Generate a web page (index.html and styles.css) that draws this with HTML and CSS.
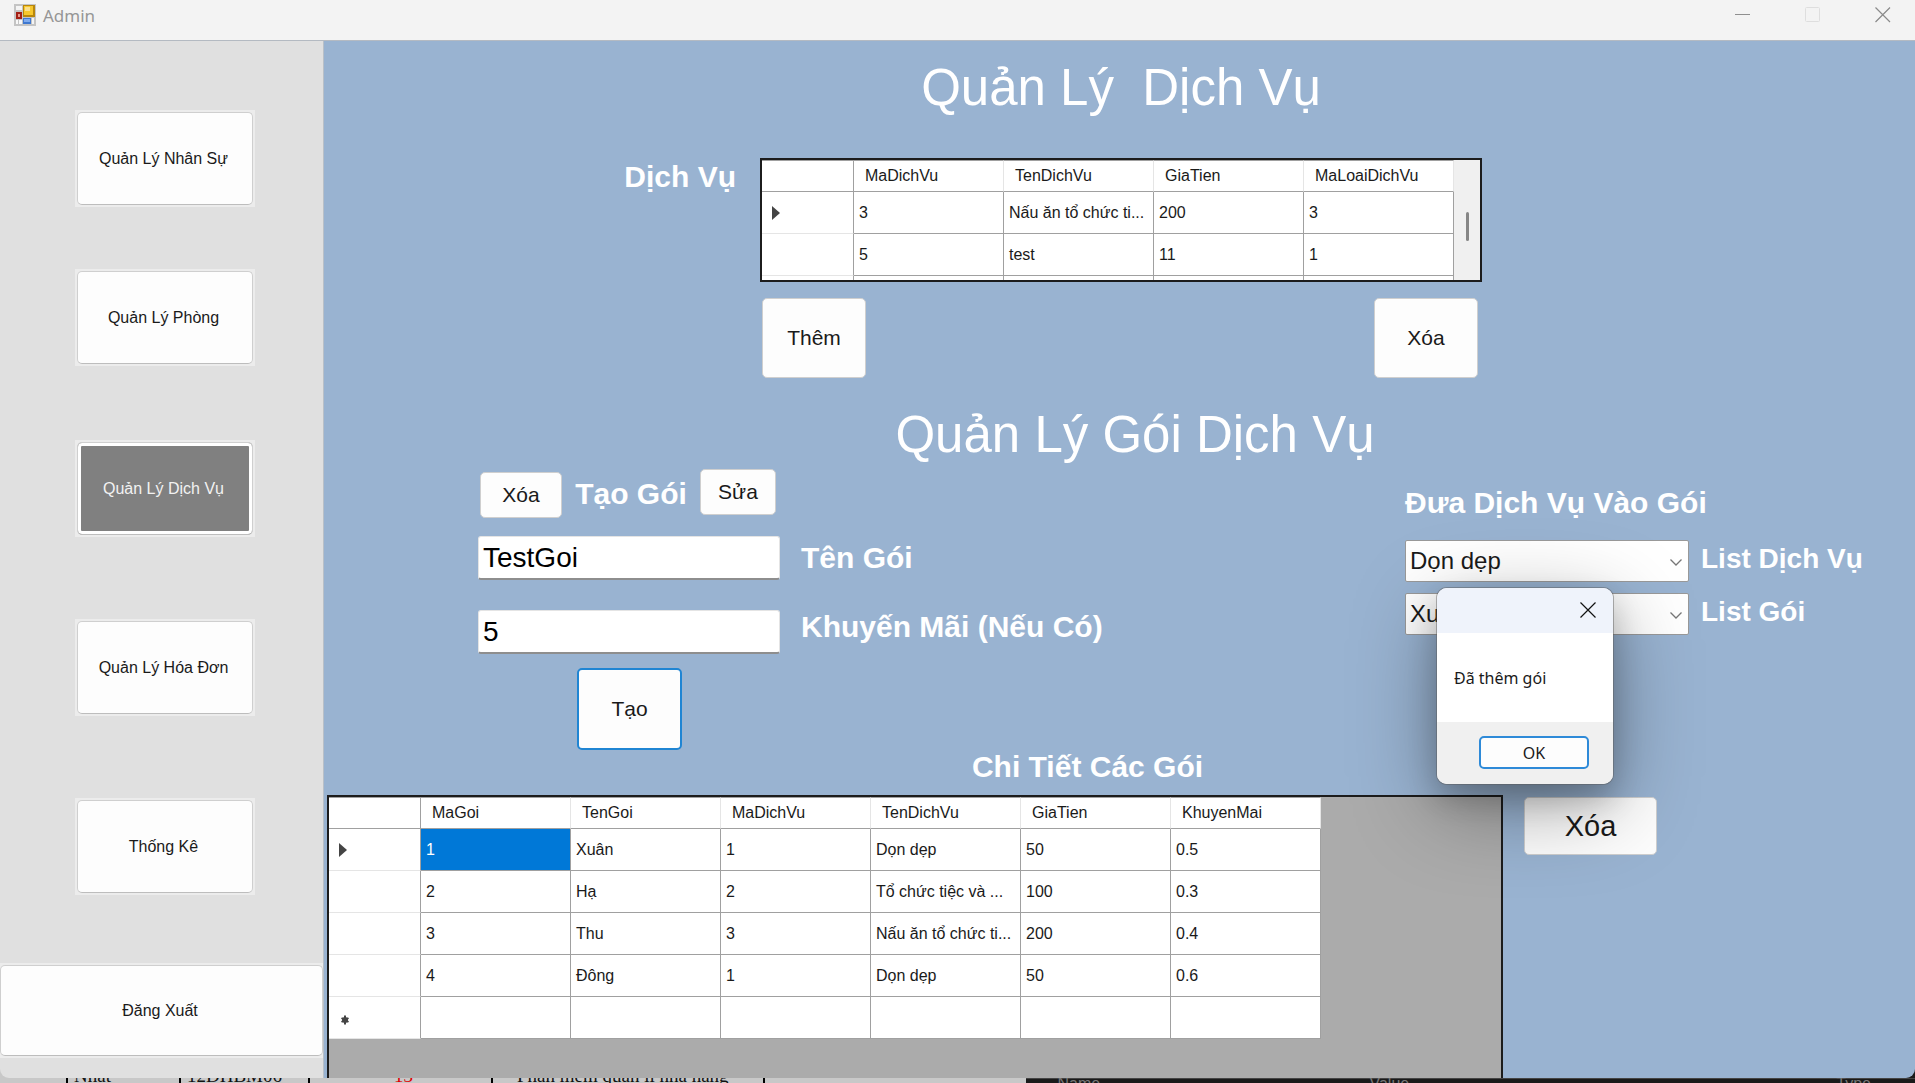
FILE: index.html
```html
<!DOCTYPE html>
<html lang="vi">
<head>
<meta charset="utf-8">
<title>Admin</title>
<link rel="stylesheet" href="styles.css">
</head>
<body>
<div class="window">
  <header class="titlebar">
    <svg class="app-icon" viewBox="0 0 22 22" aria-hidden="true">
      <rect width="22" height="22" fill="#c4c4c4"/>
      <rect x="2" y="2" width="6" height="4" fill="#f4f4f4"/>
      <rect x="2" y="16" width="2" height="4" fill="#f8f8f8"/>
      <rect x="5" y="16" width="3" height="4" fill="#f8f8f8"/>
      <rect x="18" y="14" width="2" height="6" fill="#f4f4f4"/>
      <rect x="9" y="1" width="12" height="12" fill="#b8860b"/>
      <rect x="10" y="2" width="9" height="9" fill="#f7c72c"/>
      <rect x="11" y="3" width="5" height="4" fill="#fbe08a"/>
      <rect x="2" y="8" width="6" height="7" fill="#a31f14"/>
      <rect x="4" y="10" width="2" height="3" fill="#e8978c"/>
      <rect x="9" y="14" width="8" height="6" fill="#3f78d0"/>
      <rect x="10" y="15" width="6" height="3" fill="#7fabee"/>
    </svg>
    <span class="app-title">Admin</span>
    <div class="window-controls">
      <button type="button" aria-label="Thu nhỏ"><svg viewBox="0 0 16 16"><path d="M0 7.5h15" stroke="#8f8f8f"/></svg></button>
      <button type="button" aria-label="Phóng to" disabled><svg viewBox="0 0 16 16"><rect x=".5" y=".5" width="14" height="14" rx="1" fill="none" stroke="#dedede"/></svg></button>
      <button type="button" aria-label="Đóng"><svg viewBox="0 0 16 16"><path d="M.5.5l14.500 14.500M15 .5l-14.500 14.500" stroke="#8a8a8a" stroke-width="1.2"/></svg></button>
    </div>
  </header>

  <div class="body">
    <nav class="sidebar">
      <div class="menu">
        <button type="button" class="nav-btn">Quản Lý Nhân Sự</button>
        <button type="button" class="nav-btn">Quản Lý Phòng</button>
        <button type="button" class="nav-btn active">Quản Lý Dịch Vụ</button>
        <button type="button" class="nav-btn">Quản Lý Hóa Đơn</button>
        <button type="button" class="nav-btn">Thống Kê</button>
      </div>
      <button type="button" class="nav-btn logout">Đăng Xuất</button>
    </nav>

    <main class="pane">
      <h1 class="title">Quản Lý&nbsp; Dịch Vụ</h1>

      <section class="services">
        <h2 class="label services-label">Dịch Vụ</h2>
        <div class="services-box">
          <div class="grid-frame services-grid">
            <table class="data">
              <thead>
                <tr><th class="row-head"></th><th>MaDichVu</th><th>TenDichVu</th><th>GiaTien</th><th>MaLoaiDichVu</th></tr>
              </thead>
              <tbody>
                <tr><th class="row-head"><svg class="mark" viewBox="0 0 10 14"><path d="M1 0l8 7-8 7z" fill="#444"/></svg></th><td>3</td><td>Nấu ăn tổ chức ti...</td><td>200</td><td>3</td></tr>
                <tr><th class="row-head"></th><td>5</td><td>test</td><td>11</td><td>1</td></tr>
                <tr><th class="row-head"></th><td></td><td></td><td></td><td></td></tr>
              </tbody>
            </table>
            <div class="scrollbar"><span class="thumb"></span></div>
          </div>
          <div class="services-actions">
            <button type="button" class="btn btn-square">Thêm</button>
            <button type="button" class="btn btn-square">Xóa</button>
          </div>
        </div>
      </section>

      <h1 class="title title-packages">Quản Lý Gói Dịch Vụ</h1>

      <section class="forms">
        <form class="create">
          <div class="create-head">
            <button type="button" class="btn btn-delete">Xóa</button>
            <h2 class="label">Tạo Gói</h2>
            <button type="button" class="btn btn-edit">Sửa</button>
          </div>
          <div class="field">
            <input id="package-name" class="text-input" type="text" value="TestGoi">
            <label class="label" for="package-name">Tên Gói</label>
          </div>
          <div class="field field-discount">
            <input id="package-discount" class="text-input" type="text" value="5">
            <label class="label" for="package-discount">Khuyến Mãi (Nếu Có)</label>
          </div>
          <button type="button" class="btn btn-square btn-create">Tạo</button>
        </form>

        <form class="assign">
          <h2 class="label assign-label">Đưa Dịch Vụ Vào Gói</h2>
          <div class="assign-row">
            <span class="combo">
              <select id="service-list"><option>Dọn dẹp</option></select>
              <svg viewBox="0 0 12 7"><path d="M.5.5L6 6 11.500.5" fill="none" stroke="#777" stroke-width="1.3"/></svg>
            </span>
            <label class="label list-label" for="service-list">List Dịch Vụ</label>
          </div>
          <div class="assign-row">
            <span class="combo">
              <select id="package-list"><option>Xuân</option></select>
              <svg viewBox="0 0 12 7"><path d="M.5.5L6 6 11.500.5" fill="none" stroke="#777" stroke-width="1.3"/></svg>
            </span>
            <label class="label list-label" for="package-list">List Gói</label>
          </div>

          <div class="dialog" role="dialog" aria-labelledby="dialog-text">
            <div class="dialog-head">
              <button type="button" class="dialog-close" aria-label="Đóng"><svg viewBox="0 0 16 16"><path d="M.5.5l15 15M15.5.5l-15 15" stroke="#111" stroke-width="1.2"/></svg></button>
            </div>
            <p class="dialog-text" id="dialog-text">Đã thêm gói</p>
            <div class="dialog-foot"><button type="button" class="dialog-ok">OK</button></div>
          </div>
        </form>
      </section>

      <h2 class="label details-label">Chi Tiết Các Gói</h2>

      <section class="details">
        <div class="grid-frame details-grid">
          <table class="data">
            <thead>
              <tr><th class="row-head"></th><th>MaGoi</th><th>TenGoi</th><th>MaDichVu</th><th>TenDichVu</th><th>GiaTien</th><th>KhuyenMai</th></tr>
            </thead>
            <tbody>
              <tr><th class="row-head"><svg class="mark" viewBox="0 0 10 14"><path d="M1 0l8 7-8 7z" fill="#444"/></svg></th><td class="selected">1</td><td>Xuân</td><td>1</td><td>Dọn dẹp</td><td>50</td><td>0.5</td></tr>
              <tr><th class="row-head"></th><td>2</td><td>Hạ</td><td>2</td><td>Tổ chức tiệc và ...</td><td>100</td><td>0.3</td></tr>
              <tr><th class="row-head"></th><td>3</td><td>Thu</td><td>3</td><td>Nấu ăn tổ chức ti...</td><td>200</td><td>0.4</td></tr>
              <tr><th class="row-head"></th><td>4</td><td>Đông</td><td>1</td><td>Dọn dẹp</td><td>50</td><td>0.6</td></tr>
              <tr><th class="row-head"><svg class="mark mark-new" viewBox="0 0 10 10"><path d="M5 .5v9M1.500 3l7 4M8.500 3l-7 4" stroke="#444" stroke-width="2"/><circle cx="5" cy="5" r="3" fill="#444"/></svg></th><td></td><td></td><td></td><td></td><td></td><td></td></tr>
            </tbody>
          </table>
        </div>
        <div class="details-actions"><button type="button" class="btn btn-large">Xóa</button></div>
      </section>
    </main>
  </div>
</div>

<div class="backdrop">
  <div class="doc">
    <span class="doc-cell doc-gap"></span>
    <span class="doc-cell doc-name">Nhật</span>
    <span class="doc-cell doc-class">12DHBM06</span>
    <span class="doc-cell doc-number">13</span>
    <span class="doc-cell doc-topic">Phần mềm quản lí nhà hàng</span>
  </div>
  <div class="watch"><span>Name</span><span>Value</span><span>Type</span></div>
</div>
</body>
</html>
```
FILE: styles.css
```css
* {
  box-sizing: border-box;
}

body {
  margin: 0;
  height: 100vh;
  display: flex;
  flex-direction: column;
  overflow: hidden;
  background: linear-gradient(90deg, #c8c8c8 53.6%, #1a1a1a 53.6%);
  font-family: "Liberation Sans", Arial, sans-serif;
  font-size: 16px;
  color: #1a1a1a;
}

button,
input,
select {
  font-family: inherit;
  color: inherit;
  margin: 0;
  padding: 0;
}

h1,
h2,
p {
  margin: 0;
}

.window {
  flex: 1;
  min-height: 0;
  display: flex;
  flex-direction: column;
  border-radius: 0 0 9px 9px;
  overflow: hidden;
}

/* title bar */
.titlebar {
  flex: none;
  height: 41px;
  display: flex;
  align-items: flex-start;
  padding: 4px 24px 0 14px;
  background: #f3f3f3;
  border-bottom: 1px solid #b4bac2;
}

.app-icon {
  width: 22px;
  height: 22px;
}

.app-title {
  margin-left: 7px;
  font: 17px/24px "Noto Sans", sans-serif;
  color: #969696;
}

.window-controls {
  margin-left: auto;
  display: flex;
  gap: 54px;
  padding-top: 3px;
}

.window-controls button,
.dialog-close {
  width: 16px;
  height: 16px;
  border: 0;
  background: none;
}

.window-controls svg,
.dialog-close svg {
  display: block;
  width: 16px;
  height: 16px;
}

.body {
  flex: 1;
  min-height: 0;
  display: flex;
}

/* side menu */
.sidebar {
  flex: none;
  width: 324px;
  display: flex;
  flex-direction: column;
  background: #e0e0e0;
  border-right: 1px solid #b9c0c8;
}

.menu {
  display: flex;
  flex-direction: column;
  align-items: center;
  padding: 69px 0 0 6px;
}

.nav-btn {
  width: 180px;
  height: 97px;
  border: 2px solid #ececec;
  border-radius: 0;
  background: #ececec;
  padding-right: 2px;
  font-size: 16px;
  position: relative;
  z-index: 0;
}

.nav-btn::before {
  content: "";
  position: absolute;
  inset: 0;
  z-index: -1;
  border: 1px solid #cfcfcf;
  border-bottom-color: #bdbdbd;
  border-radius: 5px;
  background: #fdfdfd;
}

.nav-btn.active {
  color: #f2f2f2;
}

.nav-btn.active::before {
  box-shadow: inset 0 0 0 3px #fff;
  background: #808080;
}

.nav-btn:nth-child(2) {
  margin-top: 62px;
}

.nav-btn:nth-child(3) {
  margin-top: 74px;
}

.nav-btn:nth-child(n + 4) {
  margin-top: 82px;
}

.nav-btn.logout {
  width: 100%;
  height: 95px;
  margin: auto 0 20px;
  border-width: 2px 0;
  padding-right: 3px;
}

/* main pane */
.pane {
  flex: 1;
  min-width: 0;
  display: flex;
  flex-direction: column;
  padding: 17px 0 0 3px;
  background: #99b3d1;
}

.title {
  font-size: 51px;
  line-height: 60px;
  font-weight: 400;
  text-align: center;
  color: #fff;
}

.title-packages {
  margin-top: 27px;
  padding-left: 28px;
}

.label {
  font-size: 30px;
  line-height: 34px;
  font-weight: 700;
  white-space: nowrap;
  color: #fff;
}

.btn {
  flex: none;
  border: 1px solid #cfcfcf;
  border-radius: 5px;
  background: #fdfdfd;
  font-size: 21px;
}

.btn-square {
  width: 104px;
  height: 80px;
}

.services {
  display: grid;
  grid-template-columns: 1fr 722px 1fr;
  margin-top: 40px;
}

.services-label {
  padding: 2px 24px 0 0;
  text-align: right;
}

.services-actions {
  display: flex;
  justify-content: space-between;
  padding: 16px 4px 0 2px;
}

/* data grids */
.grid-frame {
  display: flex;
  align-items: flex-start;
  overflow: hidden;
  border: 2px solid #1c1c1c;
  background: #ababab;
}

.services-grid {
  height: 124px;
  background: #fff;
}

.data {
  table-layout: fixed;
  width: min-content;
  border-collapse: separate;
  border-spacing: 0;
  background: #fff;
  text-align: left;
}

.data th,
.data td {
  width: 150px;
  min-width: 150px;
  max-width: 150px;
  height: 42px;
  padding: 0 3px 0 5px;
  border-right: 1px solid #a0a0a0;
  border-bottom: 1px solid #a0a0a0;
  font-weight: 400;
  white-space: nowrap;
}

.data thead th {
  height: 32px;
  padding-left: 11px;
  border-top: 1px solid #a0a0a0;
  border-right-color: #e5e5e5;
}

.data .row-head {
  width: 92px;
  min-width: 92px;
  max-width: 92px;
  padding-left: 9px;
  border-right-color: #a0a0a0;
}

.data tbody .row-head {
  border-bottom-color: #e5e5e5;
}

.data .selected {
  background: #0078d7;
  color: #fff;
}

.mark {
  display: block;
  width: 10px;
  height: 14px;
}

.mark-new {
  height: 10px;
  margin: 4px 0 0 2px;
}

.scrollbar {
  flex: 1;
  align-self: stretch;
  display: flex;
  justify-content: center;
  padding-top: 52px;
  background: #f0f0f0;
}

.thumb {
  width: 3px;
  height: 29px;
  border-radius: 2px;
  background: #868686;
}

/* package forms */
.forms {
  display: flex;
  justify-content: space-between;
  padding: 4px 48px 0 151px;
}

.create-head {
  display: flex;
  align-items: center;
  justify-content: space-between;
  width: 302px;
  height: 49px;
  padding: 0 4px 0 2px;
}

.btn-delete {
  align-self: flex-end;
  width: 82px;
  height: 46px;
}

.btn-edit {
  align-self: flex-start;
  width: 76px;
  height: 46px;
}

.field {
  display: flex;
  align-items: center;
  gap: 21px;
  margin-top: 18px;
}

.field-discount {
  align-items: flex-start;
  margin-top: 30px;
}

.text-input {
  width: 302px;
  height: 44px;
  padding: 0 4px;
  border: 1px solid #e4e4e4;
  border-bottom: 2px solid #8e8e8e;
  border-radius: 3px;
  background: #fff;
  font-size: 28px;
  color: #000;
}

.btn-create {
  display: block;
  width: 105px;
  height: 82px;
  margin: 14px 0 0 99px;
  border: 2px solid #1f85d3;
}

.assign {
  position: relative;
  width: 462px;
  padding-top: 17px;
}

.assign-label {
  margin-bottom: 20px;
}

.assign-row {
  display: flex;
  gap: 12px;
  margin-bottom: 11px;
}

.list-label {
  padding-top: 2px;
  font-size: 28px;
}

.combo {
  flex: none;
  display: grid;
  width: 284px;
  height: 42px;
}

.combo select {
  grid-area: 1 / 1;
  appearance: none;
  padding: 0 30px 2px 4px;
  border: 1px solid #999;
  border-radius: 2px;
  background: #fff;
  font-size: 24px;
}

.combo svg {
  grid-area: 1 / 1;
  place-self: center end;
  width: 12px;
  height: 7px;
  margin: 3px 7px 0 0;
  pointer-events: none;
}

/* message box floating above the form */
.dialog {
  position: absolute;
  left: 32px;
  top: 119px;
  width: 176px;
  height: 196px;
  display: flex;
  flex-direction: column;
  border-radius: 10px;
  overflow: hidden;
  background: #fff;
  box-shadow: 0 0 0 1px rgba(90, 90, 90, .45), 0 22px 84px rgba(0, 0, 0, .36), 0 14px 30px rgba(0, 0, 0, .2);
  font-family: "Noto Sans", sans-serif;
}

.dialog-head {
  height: 45px;
  padding: 13px 17px 0;
  text-align: right;
  background: #eff3fb;
}

.dialog-close {
  display: inline-block;
}

.dialog-text {
  flex: 1;
  padding: 34px 0 0 17px;
  font-size: 16px;
  line-height: 22px;
}

.dialog-foot {
  height: 62px;
  padding: 14px 24px 0;
  text-align: right;
  background: #f0f0f0;
}

.dialog-ok {
  width: 110px;
  height: 33px;
  border: 2px solid #2e8ad8;
  border-radius: 5px;
  background: #fdfdfd;
  font-size: 16px;
}

/* package details */
.details-label {
  padding-right: 67px;
  text-align: center;
}

.details {
  flex: 1;
  min-height: 0;
  display: flex;
  margin-top: 11px;
}

.details-grid {
  flex: 1;
  border-bottom: 0;
}

.details-actions {
  flex: none;
  width: 412px;
  padding: 2px 0 0 21px;
}

.btn-large {
  width: 133px;
  height: 58px;
  font-size: 29px;
}

/* windows lying behind, seen along the bottom edge */
.backdrop {
  flex: none;
  height: 5px;
  display: flex;
  overflow: hidden;
}

.doc {
  flex: none;
  width: 53.6%;
  display: flex;
  align-items: flex-end;
  font: 19px/15px "Liberation Serif", serif;
  color: #111;
}

.doc-cell {
  flex: none;
  height: 15px;
  padding-left: 6px;
  border-right: 2px solid #000;
  white-space: nowrap;
}

.doc-gap {
  width: 68px;
}

.doc-name {
  width: 113px;
}

.doc-class {
  width: 129px;
}

.doc-number {
  width: 183px;
  text-align: center;
  color: #e00000;
}

.doc-topic {
  width: 272px;
  padding-left: 24px;
}

.watch {
  flex: 1;
  display: grid;
  grid-template-columns: 312px 1fr auto;
  align-items: start;
  padding: 0 44px 0 31px;
  border-top: 1px solid #444;
  font-size: 16px;
  line-height: 10px;
  color: #777;
}
```
